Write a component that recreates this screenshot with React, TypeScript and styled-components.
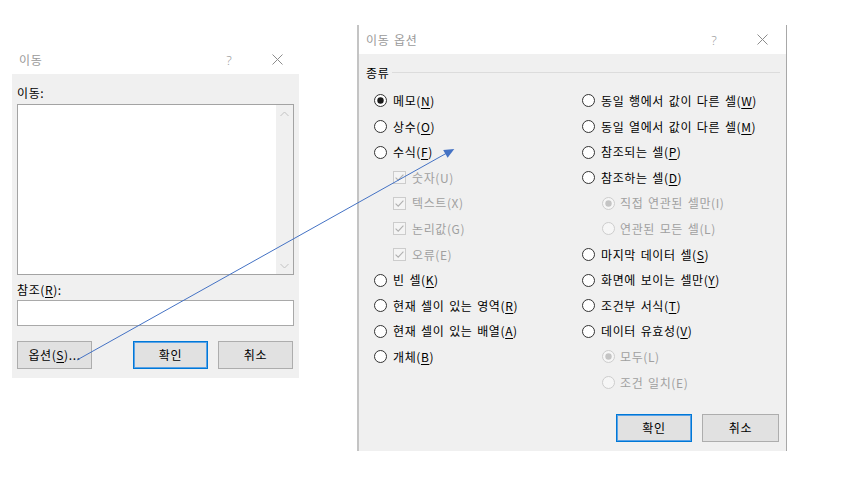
import React from "react";
import styled, { createGlobalStyle } from "styled-components";

const GlobalStyle = createGlobalStyle`
  html, body { margin: 0; padding: 0; background: #ffffff; }
  body {
    font-family: "Noto Sans CJK KR", "Noto Sans", sans-serif;
    font-size: 12px;
    color: #000;
    letter-spacing: 0.6px;
    word-spacing: 1.5px;
  }
`;

const Page = styled.div`
  position: relative;
  width: 844px;
  height: 477px;
  overflow: hidden;
  display: flex;
  align-items: flex-start;
`;

const Dialog = styled.div<{ $top: number; $left: number; $width: number; $framed?: boolean }>`
  box-sizing: border-box;
  margin-top: ${(p) => p.$top}px;
  margin-left: ${(p) => p.$left}px;
  width: ${(p) => p.$width}px;
  display: flex;
  flex-direction: column;
  background: #ffffff;
  border-left: ${(p) => (p.$framed ? "2px solid #c4c4c4" : "none")};
  border-right: ${(p) => (p.$framed ? "1px solid #a8a8a8" : "none")};
`;

const TitleBar = styled.div<{ $padRight: number }>`
  height: 29px;
  display: flex;
  align-items: center;
  padding-left: 7px;
  padding-right: ${(p) => p.$padRight}px;
  color: #9a9a9a;
  font-size: 12px;
  line-height: 16px;
`;

const TitleText = styled.span`
  flex: 1;
`;

const TitleButton = styled.span`
  width: 24px;
  height: 20px;
  display: flex;
  align-items: center;
  justify-content: center;
  color: #9a9a9a;
  font-family: "Noto Sans", sans-serif;
  font-weight: 300;
  font-size: 13px;
  letter-spacing: 0;
`;

const TitleGap = styled.span`
  width: 24px;
`;

const Body = styled.div<{ $height?: number; $pad: string }>`
  background: #f0f0f0;
  display: flex;
  flex-direction: column;
  padding: ${(p) => p.$pad};
  height: ${(p) => (p.$height ? `${p.$height}px` : "auto")};
  box-sizing: border-box;
`;

const FieldLabel = styled.div<{ $mt?: number; $mb?: number }>`
  height: 16px;
  line-height: 16px;
  margin-top: ${(p) => p.$mt ?? 0}px;
  margin-bottom: ${(p) => p.$mb ?? 0}px;
`;

const ListBox = styled.div`
  box-sizing: border-box;
  height: 171px;
  border: 1px solid #a3a3a3;
  background: #ffffff;
  display: flex;
  justify-content: flex-end;
`;

const ScrollTrack = styled.div`
  width: 17px;
  background: #f0f0f0;
  display: flex;
  flex-direction: column;
  justify-content: space-between;
  align-items: center;
  padding: 6px 0 5px;
`;

const TextInput = styled.div`
  box-sizing: border-box;
  height: 26px;
  margin-top: 2px;
  border: 1px solid #a9a9a9;
  background: #ffffff;
`;

const ButtonRow = styled.div<{ $mt?: number }>`
  display: flex;
  justify-content: space-between;
  margin-top: ${(p) => (p.$mt !== undefined ? `${p.$mt}px` : "auto")};
`;

const ButtonGroup = styled.div<{ $padRight?: number }>`
  display: flex;
  gap: 10px;
  margin-left: auto;
  padding-right: ${(p) => p.$padRight ?? 0}px;
`;

const Button = styled.div<{ $primary?: boolean; $width: number }>`
  box-sizing: border-box;
  width: ${(p) => p.$width}px;
  height: 28px;
  display: flex;
  align-items: center;
  justify-content: center;
  background: #e1e1e1;
  border: 1px solid ${(p) => (p.$primary ? "#0078d7" : "#adadad")};
  box-shadow: ${(p) => (p.$primary ? "inset 0 0 0 1px #5aa2e6" : "none")};
  font-size: 12px;
  line-height: 16px;
  color: #000;
`;

const GroupHeader = styled.div`
  display: flex;
  align-items: center;
  height: 16px;
  line-height: 16px;
`;

const GroupRule = styled.div`
  flex: 1;
  height: 1px;
  margin-left: 3px;
  margin-top: -1px;
  background: #dcdcdc;
`;

const Columns = styled.div`
  display: grid;
  grid-template-columns: 208px 1fr;
  margin-top: 7.2px;
  padding-left: 8px;
`;

const Column = styled.div`
  display: flex;
  flex-direction: column;
`;

const Row = styled.div<{ $indent?: number; $disabled?: boolean }>`
  height: 25.6px;
  display: flex;
  align-items: center;
  padding-left: ${(p) => p.$indent ?? 0}px;
  color: ${(p) => (p.$disabled ? "#a0a0a0" : "#000")};
  line-height: 16px;
  white-space: nowrap;
`;

const Mark = styled.svg<{ $gap: number }>`
  flex: none;
  width: 13px;
  height: 13px;
  margin-right: ${(p) => p.$gap}px;
`;

const Key = styled.span`
  text-decoration: underline;
  text-underline-offset: 2px;
`;

const ArrowLayer = styled.svg`
  position: absolute;
  left: 0;
  top: 0;
  width: 844px;
  height: 477px;
  pointer-events: none;
`;

type Item = {
  text: string;
  k: string;
  kind: "radio" | "check";
  checked?: boolean;
  disabled?: boolean;
  indent?: number;
};

const leftItems: Item[] = [
  { text: "메모", k: "N", kind: "radio", checked: true },
  { text: "상수", k: "O", kind: "radio" },
  { text: "수식", k: "F", kind: "radio" },
  { text: "숫자", k: "U", kind: "check", checked: true, disabled: true, indent: 19 },
  { text: "텍스트", k: "X", kind: "check", checked: true, disabled: true, indent: 19 },
  { text: "논리값", k: "G", kind: "check", checked: true, disabled: true, indent: 19 },
  { text: "오류", k: "E", kind: "check", checked: true, disabled: true, indent: 19 },
  { text: "빈 셀", k: "K", kind: "radio" },
  { text: "현재 셀이 있는 영역", k: "R", kind: "radio" },
  { text: "현재 셀이 있는 배열", k: "A", kind: "radio" },
  { text: "개체", k: "B", kind: "radio" },
];

const rightItems: Item[] = [
  { text: "동일 행에서 값이 다른 셀", k: "W", kind: "radio" },
  { text: "동일 열에서 값이 다른 셀", k: "M", kind: "radio" },
  { text: "참조되는 셀", k: "P", kind: "radio" },
  { text: "참조하는 셀", k: "D", kind: "radio" },
  { text: "직접 연관된 셀만", k: "I", kind: "radio", checked: true, disabled: true, indent: 20 },
  { text: "연관된 모든 셀", k: "L", kind: "radio", disabled: true, indent: 20 },
  { text: "마지막 데이터 셀", k: "S", kind: "radio" },
  { text: "화면에 보이는 셀만", k: "Y", kind: "radio" },
  { text: "조건부 서식", k: "T", kind: "radio" },
  { text: "데이터 유효성", k: "V", kind: "radio" },
  { text: "모두", k: "L", kind: "radio", checked: true, disabled: true, indent: 20 },
  { text: "조건 일치", k: "E", kind: "radio", disabled: true, indent: 20 },
];

function RadioMark({ checked, disabled, gap }: { checked?: boolean; disabled?: boolean; gap: number }) {
  return (
    <Mark $gap={gap} viewBox="0 0 13 13">
      <circle
        cx="6.5"
        cy="6.5"
        r="6"
        fill={disabled ? "#f6f6f6" : "#ffffff"}
        stroke={disabled ? "#cccccc" : "#333333"}
        strokeWidth="1"
      />
      {checked && <circle cx="6.5" cy="6.5" r="3.2" fill={disabled ? "#c4c4c4" : "#1a1a1a"} />}
    </Mark>
  );
}

function CheckMark({ checked, disabled, gap }: { checked?: boolean; disabled?: boolean; gap: number }) {
  return (
    <Mark $gap={gap} viewBox="0 0 13 13">
      <rect
        x="0.5"
        y="0.5"
        width="12"
        height="12"
        fill={disabled ? "#f4f4f4" : "#ffffff"}
        stroke={disabled ? "#cccccc" : "#333333"}
      />
      {checked && (
        <polyline
          points="2.6,6.6 5.2,9.2 10.4,3.6"
          fill="none"
          stroke={disabled ? "#b0b0b0" : "#000"}
          strokeWidth="1.1"
        />
      )}
    </Mark>
  );
}

function OptionRow({ item, gap }: { item: Item; gap: number }) {
  const g = item.kind === "check" ? 6 : item.indent ? 5 : gap;
  return (
    <Row $indent={item.indent} $disabled={item.disabled}>
      {item.kind === "radio" ? (
        <RadioMark checked={item.checked} disabled={item.disabled} gap={g} />
      ) : (
        <CheckMark checked={item.checked} disabled={item.disabled} gap={g} />
      )}
      <span>
        {item.text}
        {item.disabled ? (
          `(${item.k})`
        ) : (
          <>
            (<Key>{item.k}</Key>)
          </>
        )}
      </span>
    </Row>
  );
}

function CloseIcon() {
  return (
    <svg width="11" height="11" viewBox="0 0 11 11">
      <path d="M0.5 0.5 L10.5 10.5 M10.5 0.5 L0.5 10.5" stroke="#8c8c8c" strokeWidth="1" fill="none" />
    </svg>
  );
}

function Chevron({ up }: { up?: boolean }) {
  return (
    <svg width="9" height="6" viewBox="0 0 9 6">
      <polyline
        points={up ? "0.5,5 4.5,1 8.5,5" : "0.5,1 4.5,5 8.5,1"}
        fill="none"
        stroke="#c2c2c2"
        strokeWidth="1"
      />
    </svg>
  );
}

export default function App() {
  return (
    <>
      <GlobalStyle />
      <Page>
        <Dialog $top={45} $left={12} $width={287}>
          <TitleBar $padRight={10}>
            <TitleText>이동</TitleText>
            <TitleButton>?</TitleButton>
            <TitleGap />
            <TitleButton>
              <CloseIcon />
            </TitleButton>
          </TitleBar>
          <Body $pad="11px 5px 9px 5px">
            <FieldLabel $mb={3}>이동:</FieldLabel>
            <ListBox>
              <ScrollTrack>
                <Chevron up />
                <Chevron />
              </ScrollTrack>
            </ListBox>
            <FieldLabel $mt={7}>
              참조(<Key>R</Key>):
            </FieldLabel>
            <TextInput />
            <ButtonRow $mt={15}>
              <Button $width={75}>
                옵션(<Key>S</Key>)...
              </Button>
              <ButtonGroup $padRight={1}>
                <Button $width={75} $primary>
                  확인
                </Button>
                <Button $width={75}>취소</Button>
              </ButtonGroup>
            </ButtonRow>
          </Body>
        </Dialog>

        <Dialog $top={25} $left={58} $width={430} $framed>
          <TitleBar $padRight={12}>
            <TitleText>이동 옵션</TitleText>
            <TitleButton>?</TitleButton>
            <TitleGap />
            <TitleButton>
              <CloseIcon />
            </TitleButton>
          </TitleBar>
          <Body $height={397} $pad="11px 6px 9px 7px">
            <GroupHeader>
              종류
              <GroupRule />
            </GroupHeader>
            <Columns>
              <Column>
                {leftItems.map((it, i) => (
                  <OptionRow key={i} item={it} gap={6} />
                ))}
              </Column>
              <Column>
                {rightItems.map((it, i) => (
                  <OptionRow key={i} item={it} gap={6} />
                ))}
              </Column>
            </Columns>
            <ButtonRow>
              <ButtonGroup $padRight={1}>
                <Button $width={76} $primary>
                  확인
                </Button>
                <Button $width={77}>취소</Button>
              </ButtonGroup>
            </ButtonRow>
          </Body>
        </Dialog>

        <ArrowLayer viewBox="0 0 844 477">
          <line x1="77" y1="360" x2="446" y2="153.5" stroke="#4472c4" strokeWidth="1" />
          <polygon points="454.3,149 447.6,157.8 443.2,150" fill="#4472c4" />
        </ArrowLayer>
      </Page>
    </>
  );
}
